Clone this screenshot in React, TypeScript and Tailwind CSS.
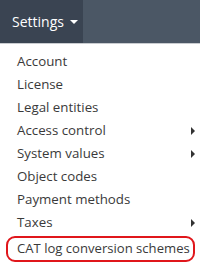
import React from "react";

const items: { label: string; sub?: boolean; active?: boolean }[] = [
  { label: "Account" },
  { label: "License" },
  { label: "Legal entities" },
  { label: "Access control", sub: true },
  { label: "System values", sub: true },
  { label: "Object codes" },
  { label: "Payment methods" },
  { label: "Taxes", sub: true },
  { label: "CAT log conversion schemes", active: true },
];

export default function App() {
  return (
    <div
      className="w-[200px] h-[266px] bg-white overflow-hidden"
      style={{ fontFamily: '"Open Sans", sans-serif' }}
    >
      <div className="flex h-[44px] bg-[#4b5765] border-b border-[#c9ccd0]">
        <div className="flex items-center w-[83px] h-full bg-[#3a4452] pl-[12px] text-white text-[14px]">
          Settings
          <span className="ml-[6px] w-0 h-0 border-x-[4px] border-x-transparent border-t-[4px] border-t-white" />
        </div>
      </div>
      <ul className="pt-[6px]">
        {items.map((it) =>
          it.active ? (
            <li key={it.label} className="pl-[6px] pt-[2px] text-[13.1px] text-[#3a3a3a]">
              <span className="flex items-center h-[26px] w-[189px] pl-[9px] whitespace-nowrap rounded-[9px] border-2 border-[#e0161b]">
                {it.label}
              </span>
            </li>
          ) : (
            <li
              key={it.label}
              className="flex items-center justify-between h-[23px] pl-[17px] pr-[5px] text-[13.3px] text-[#3a3a3a] whitespace-nowrap"
            >
              <span>{it.label}</span>
              {it.sub && (
                <span className="w-0 h-0 border-y-[4px] border-y-transparent border-l-[4px] border-l-[#333]" />
              )}
            </li>
          )
        )}
      </ul>
    </div>
  );
}
